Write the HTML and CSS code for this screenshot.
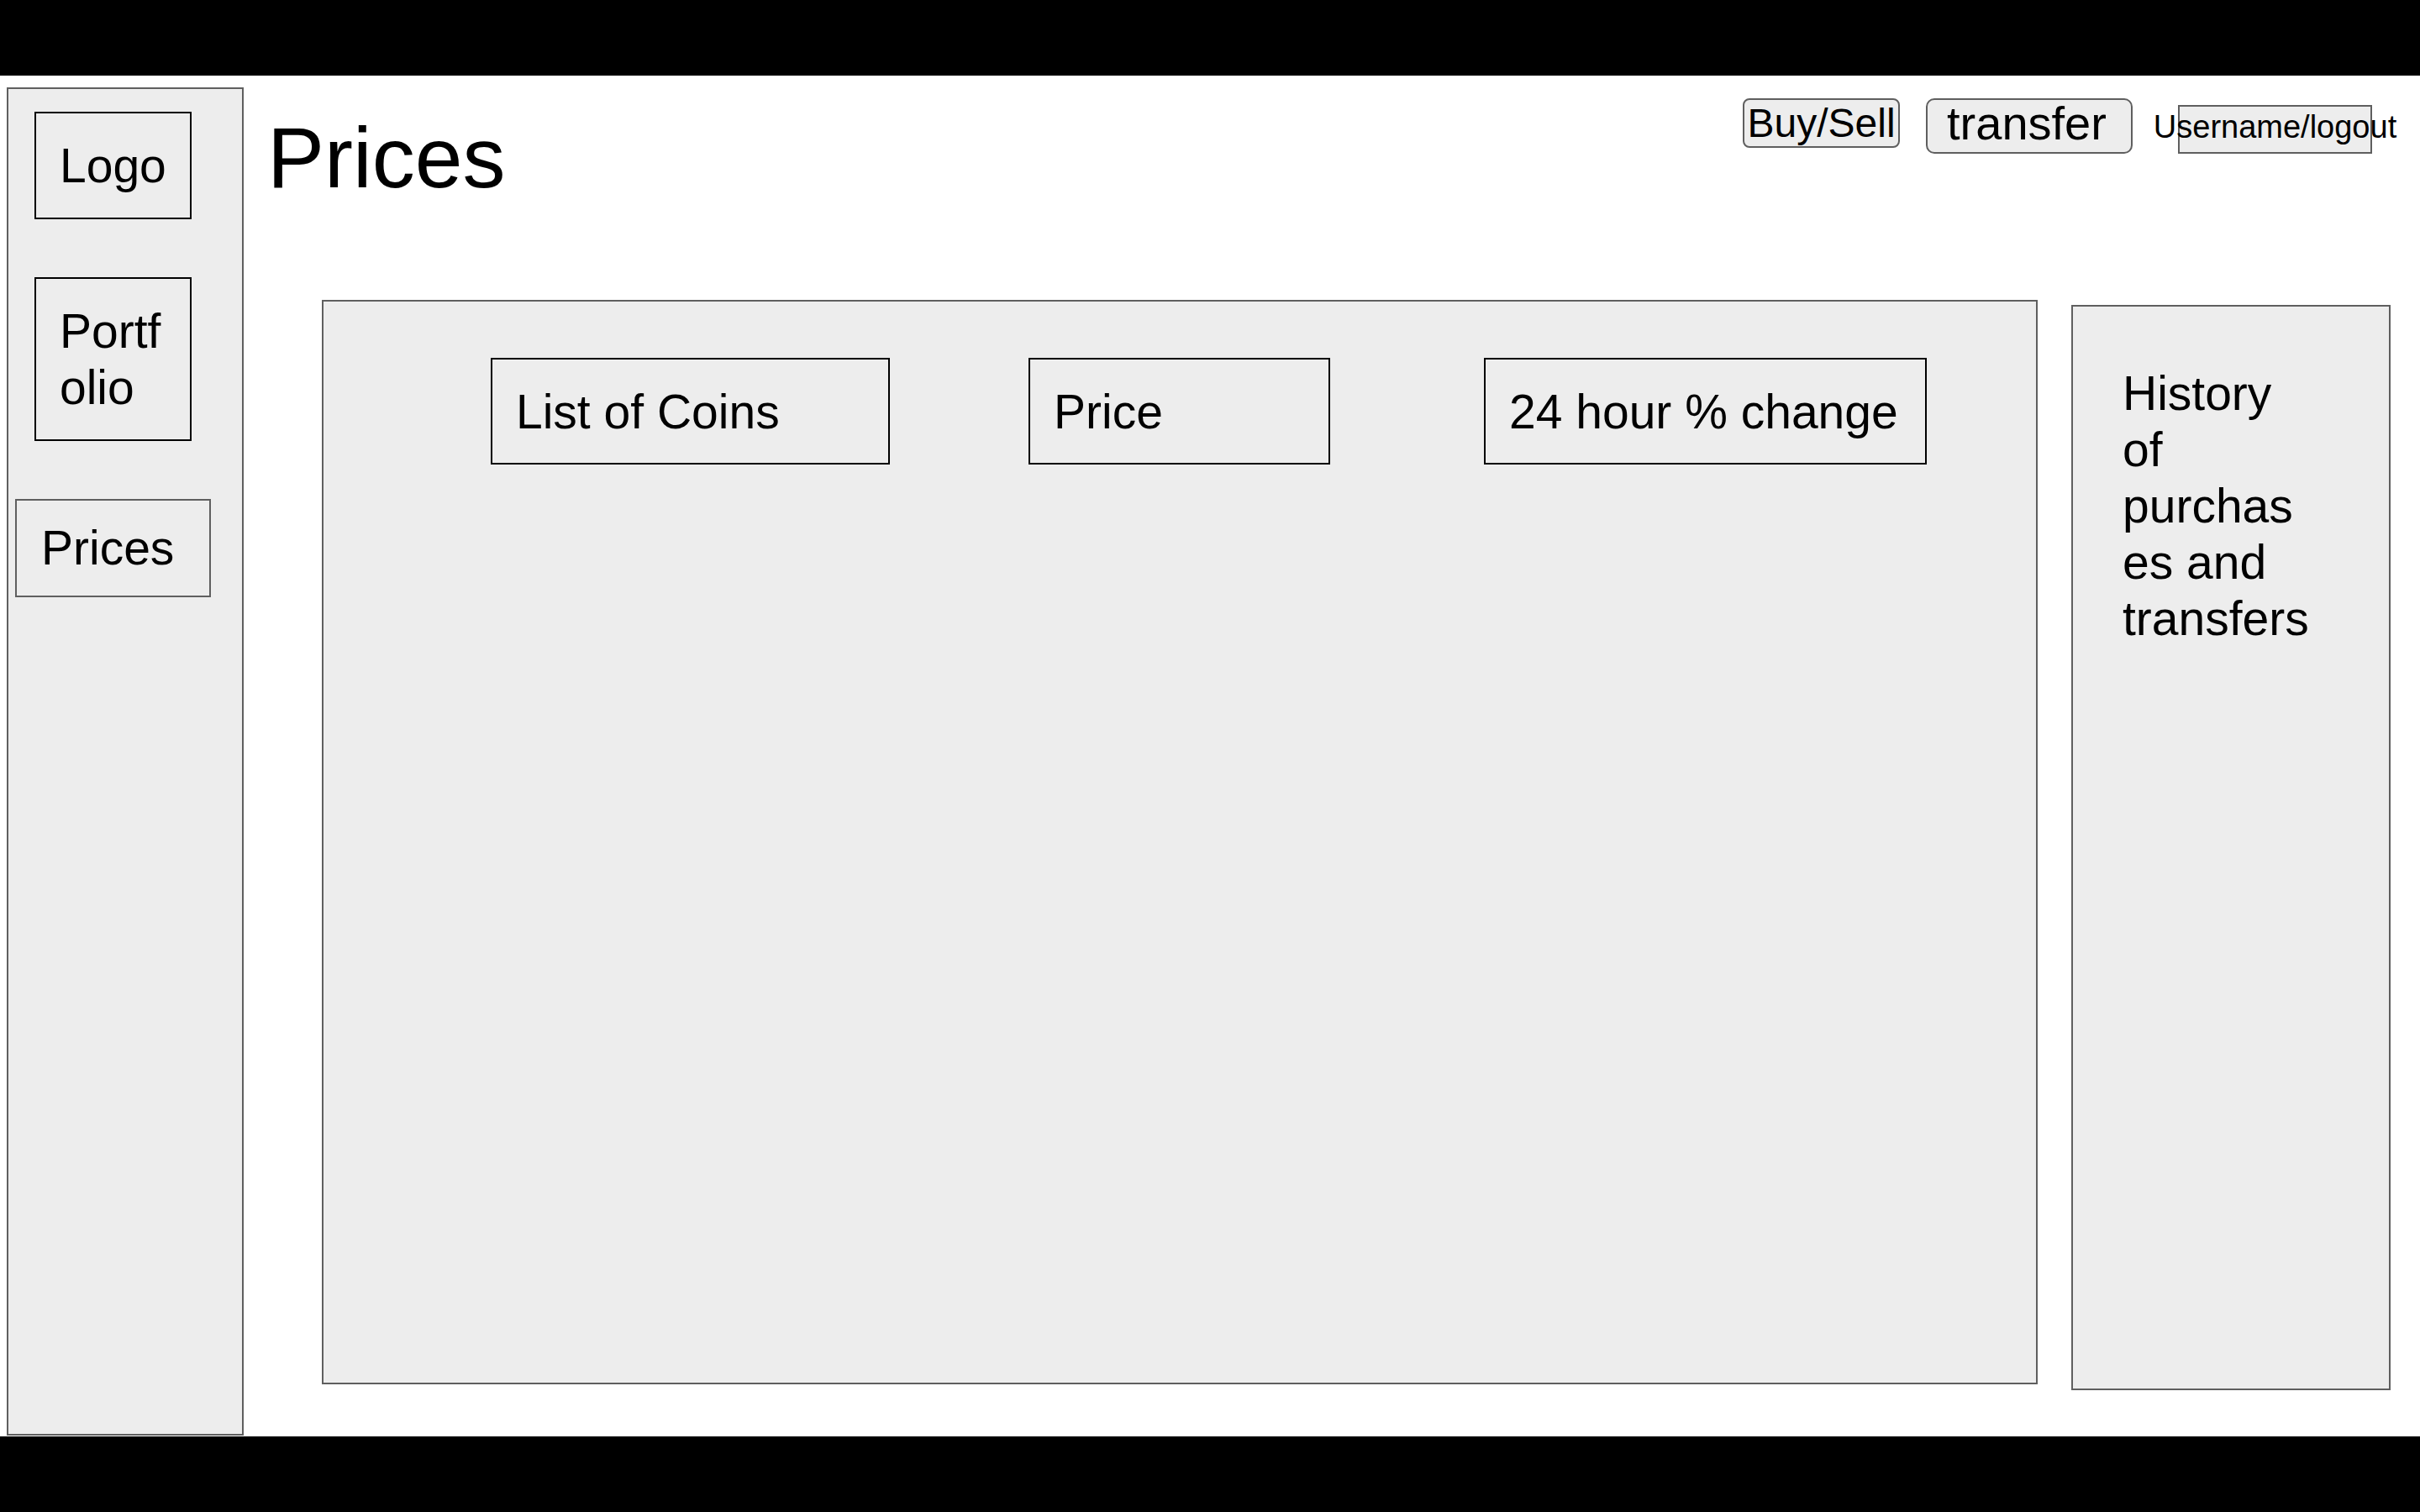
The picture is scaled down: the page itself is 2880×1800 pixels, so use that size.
FILE: index.html
```html
<!DOCTYPE html>
<html lang="en">
<head>
<meta charset="utf-8">
<title>Prices</title>
<link rel="stylesheet" href="styles.css">
</head>
<body>
<div class="bar"></div>
<div class="stage">
  <aside class="sidebar">
    <div class="nav-box nav-logo">Logo</div>
    <div class="nav-box nav-portfolio"><span class="wrap">Portfolio</span></div>
    <div class="nav-box nav-current">Prices</div>
  </aside>
  <main class="content">
    <header class="topbar">
      <h1 class="title">Prices</h1>
      <div class="actions">
        <div class="btn btn-buy">Buy/Sell</div>
        <div class="btn btn-transfer">transfer</div>
        <div class="btn btn-user">Username/logout</div>
      </div>
    </header>
    <div class="panels">
      <section class="table-panel">
        <div class="col col-coins">List of Coins</div>
        <div class="col col-price">Price</div>
        <div class="col col-change">24 hour % change</div>
      </section>
      <aside class="history">
        <p class="history-text">History of purchases and transfers</p>
      </aside>
    </div>
  </main>
</div>
<div class="bar"></div>
</body>
</html>
```
FILE: styles.css
```css
* { box-sizing: border-box; }
html, body {
  margin: 0;
  padding: 0;
  background: #ffffff;
}
body {
  width: 2880px;
  height: 1800px;
  font-family: "Liberation Sans", Arial, sans-serif;
  color: #000;
  overflow: hidden;
}
.bar {
  height: 90px;
  background: #000;
}
.stage {
  height: 1620px;
  display: flex;
  align-items: flex-start;
}

/* Sidebar */
.sidebar {
  flex: none;
  width: 282px;
  height: 1605px;
  margin: 14px 0 0 8px;
  border: 2px solid #5f5f5f;
  background: #ededed;
  padding-top: 27px;
  display: flex;
  flex-direction: column;
  gap: 69px;
}
.nav-box {
  display: flex;
  align-items: center;
  padding-left: 28px;
  font-size: 57px;
  line-height: 67px;
  background: #ededed;
}
.nav-logo {
  width: 187px;
  height: 128px;
  margin-left: 31px;
  border: 2px solid #000;
}
.nav-portfolio {
  width: 187px;
  height: 195px;
  margin-left: 31px;
  border: 2px solid #000;
}
.wrap {
  display: block;
  width: 130px;
  overflow-wrap: anywhere;
}
.nav-current {
  width: 233px;
  height: 117px;
  margin-left: 8px;
  border: 2px solid #5f5f5f;
  padding-left: 29px;
}

/* Content */
.content {
  flex: 1;
  display: flex;
  flex-direction: column;
}
.topbar {
  height: 267px;
  display: flex;
  justify-content: space-between;
  align-items: flex-start;
  padding: 0 57px 0 28px;
}
.title {
  margin: 47px 0 0;
  font-size: 102px;
  line-height: 102px;
  font-weight: normal;
}
.actions {
  display: flex;
  align-items: flex-start;
  margin-top: 27px;
}
.btn {
  display: flex;
  align-items: center;
  justify-content: center;
  white-space: nowrap;
  border: 2px solid #5f5f5f;
  background: #ededed;
}
.btn-buy {
  width: 187px;
  height: 59px;
  border-radius: 8px;
  font-size: 48px;
}
.btn-transfer {
  width: 246px;
  height: 66px;
  margin-left: 31px;
  border-radius: 10px;
  font-size: 56px;
  padding: 0 6px 8px 0;
}
.btn-user {
  width: 231px;
  height: 58px;
  margin: 8px 0 0 54px;
  font-size: 38px;
  padding-bottom: 5px;
}

/* Panels */
.panels {
  display: flex;
  align-items: flex-start;
}
.table-panel {
  flex: none;
  width: 2042px;
  height: 1291px;
  margin-left: 93px;
  border: 2px solid #5f5f5f;
  background: #ededed;
  display: flex;
  align-items: flex-start;
  padding: 67px 0 0 199px;
}
.col {
  flex: none;
  height: 127px;
  border: 2px solid #000;
  display: flex;
  align-items: center;
  padding-left: 28px;
  font-size: 57px;
  white-space: nowrap;
}
.col-coins { width: 475px; }
.col-price { width: 359px; margin-left: 165px; }
.col-change { width: 527px; margin-left: 183px; }

.history {
  flex: none;
  width: 380px;
  height: 1292px;
  margin: 6px 0 0 40px;
  border: 2px solid #5f5f5f;
  background: #ededed;
  padding: 70px 0 0 59px;
}
.history-text {
  margin: 0;
  width: 228px;
  font-size: 57px;
  line-height: 67px;
  overflow-wrap: anywhere;
}
```
